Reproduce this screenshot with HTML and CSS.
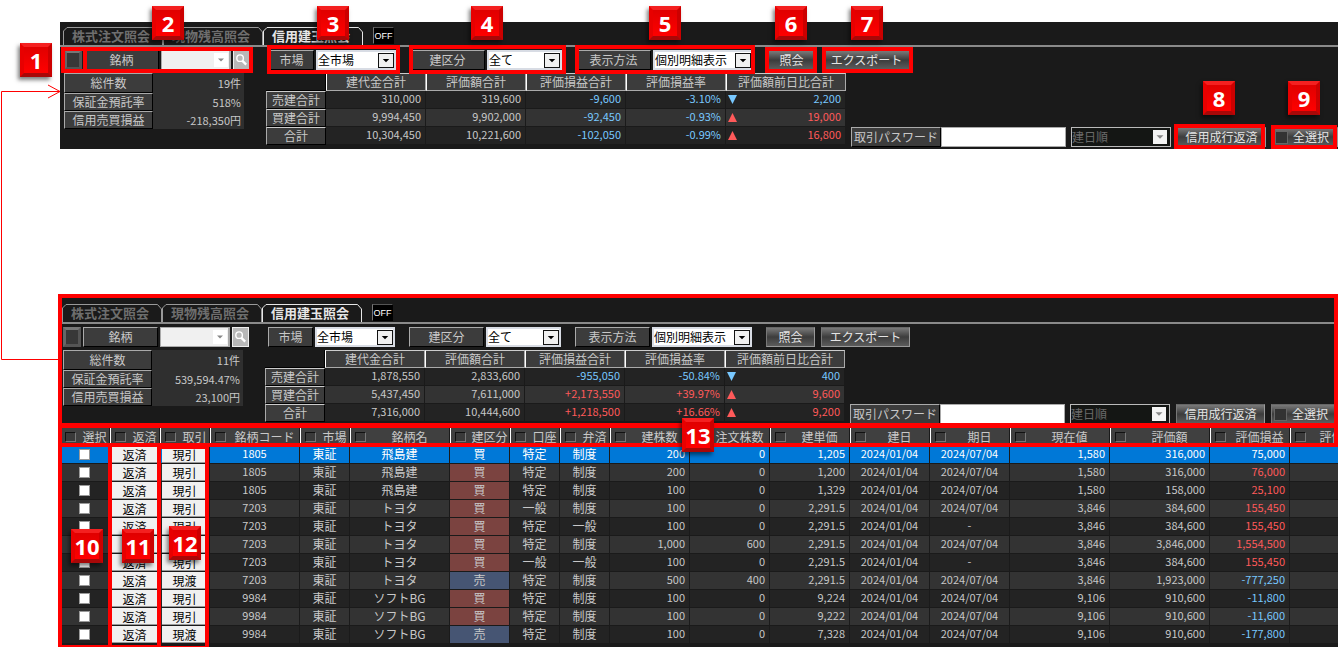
FILE: index.html
```html
<!DOCTYPE html>
<html lang="ja">
<head>
<meta charset="utf-8">
<title>信用建玉照会</title>
<link rel="stylesheet" href="styles.css">
</head>
<body>
<svg class="defs" width="0" height="0" aria-hidden="true">
  <symbol id="arrow" viewBox="0 0 16 16"><path d="M4 6h8l-4 4z" fill="currentColor"/></symbol>
  <symbol id="lens" viewBox="0 0 16 16"><circle cx="6.5" cy="6" r="3.5" fill="#b8b8b8" stroke="#fff" stroke-width="1.5"/><path d="M9 9l4 4" stroke="#fff" stroke-width="2.5"/></symbol>
  <symbol id="tab" viewBox="0 0 100 18" preserveAspectRatio="none"><path d="M.5 18V4L4 .5H95.500L99.500 5V18" fill="none" stroke="currentColor" stroke-width="1"/></symbol>
</svg>
<main class="guide">
  <section class="panel panel-top">
    <div class="head">
      <nav class="tabs">
        <a class="tab" href="#"><svg><use href="#tab"/></svg>株式注文照会</a>
        <a class="tab" href="#"><svg><use href="#tab"/></svg>現物残高照会</a>
        <a class="tab active" href="#"><svg><use href="#tab"/></svg>信用建玉照会</a>
        <button class="off" type="button">OFF</button>
      </nav>
      <form class="toolbar">
        <div class="group symbol">
          <input class="toggle" type="checkbox" aria-label="銘柄指定">
          <label class="caption mid" for="code1">銘柄</label>
          <span class="combo blank"><input id="code1" type="text"><svg class="arrow"><use href="#arrow"/></svg></span>
          <button class="search" type="button" aria-label="検索"><svg><use href="#lens"/></svg></button>
        </div>
        <div class="group">
          <label class="caption small" for="market1">市場</label>
          <span class="combo market"><select id="market1"><option>全市場</option></select><svg class="arrow"><use href="#arrow"/></svg></span>
        </div>
        <div class="group">
          <label class="caption mid" for="side1">建区分</label>
          <span class="combo side"><select id="side1"><option>全て</option></select><svg class="arrow"><use href="#arrow"/></svg></span>
        </div>
        <div class="group">
          <label class="caption mid" for="view1">表示方法</label>
          <span class="combo view"><select id="view1"><option>個別明細表示</option></select><svg class="arrow"><use href="#arrow"/></svg></span>
        </div>
        <div class="group actions">
          <button class="btn query" type="button">照会</button>
          <button class="btn export" type="button">エクスポート</button>
        </div>
      </form>
      <div class="figures">
        <table class="stats">
          <tr><th>総件数</th><td>19件</td></tr>
          <tr><th>保証金預託率</th><td>518%</td></tr>
          <tr><th>信用売買損益</th><td>-218,350円</td></tr>
        </table>
        <table class="totals">
          <tr><td class="corner"></td><th>建代金合計</th><th>評価額合計</th><th>評価損益合計</th><th>評価損益率</th><th class="wide">評価額前日比合計</th></tr>
          <tr><th>売建合計</th><td>310,000</td><td>319,600</td><td class="down">-9,600</td><td class="down">-3.10%</td><td class="down"><i class="tri fall"></i>2,200</td></tr>
          <tr><th>買建合計</th><td>9,994,450</td><td>9,902,000</td><td class="down">-92,450</td><td class="down">-0.93%</td><td class="up"><i class="tri rise"></i>19,000</td></tr>
          <tr><th>合計</th><td>10,304,450</td><td>10,221,600</td><td class="down">-102,050</td><td class="down">-0.99%</td><td class="up"><i class="tri rise"></i>16,800</td></tr>
        </table>
        <form class="order">
          <label class="caption pass" for="pass1">取引パスワード</label>
          <input class="password" id="pass1" type="password">
          <span class="combo sort"><select aria-label="並び順" disabled><option>建日順</option></select><svg class="arrow"><use href="#arrow"/></svg></span>
          <button class="btn repay" type="button">信用成行返済</button>
          <label class="btn all"><input type="checkbox">全選択</label>
        </form>
      </div>
    </div>
  </section>

  <section class="panel panel-bottom">
    <div class="head">
      <nav class="tabs">
        <a class="tab" href="#"><svg><use href="#tab"/></svg>株式注文照会</a>
        <a class="tab" href="#"><svg><use href="#tab"/></svg>現物残高照会</a>
        <a class="tab active" href="#"><svg><use href="#tab"/></svg>信用建玉照会</a>
        <button class="off" type="button">OFF</button>
      </nav>
      <form class="toolbar">
        <div class="group symbol">
          <input class="toggle" type="checkbox" aria-label="銘柄指定">
          <label class="caption mid" for="code2">銘柄</label>
          <span class="combo blank"><input id="code2" type="text"><svg class="arrow"><use href="#arrow"/></svg></span>
          <button class="search" type="button" aria-label="検索"><svg><use href="#lens"/></svg></button>
        </div>
        <div class="group">
          <label class="caption small" for="market2">市場</label>
          <span class="combo market"><select id="market2"><option>全市場</option></select><svg class="arrow"><use href="#arrow"/></svg></span>
        </div>
        <div class="group">
          <label class="caption mid" for="side2">建区分</label>
          <span class="combo side"><select id="side2"><option>全て</option></select><svg class="arrow"><use href="#arrow"/></svg></span>
        </div>
        <div class="group">
          <label class="caption mid" for="view2">表示方法</label>
          <span class="combo view"><select id="view2"><option>個別明細表示</option></select><svg class="arrow"><use href="#arrow"/></svg></span>
        </div>
        <div class="group actions">
          <button class="btn query" type="button">照会</button>
          <button class="btn export" type="button">エクスポート</button>
        </div>
      </form>
      <div class="figures">
        <table class="stats">
          <tr><th>総件数</th><td>11件</td></tr>
          <tr><th>保証金預託率</th><td>539,594.47%</td></tr>
          <tr><th>信用売買損益</th><td>23,100円</td></tr>
        </table>
        <table class="totals">
          <tr><td class="corner"></td><th>建代金合計</th><th>評価額合計</th><th>評価損益合計</th><th>評価損益率</th><th class="wide">評価額前日比合計</th></tr>
          <tr><th>売建合計</th><td>1,878,550</td><td>2,833,600</td><td class="down">-955,050</td><td class="down">-50.84%</td><td class="down"><i class="tri fall"></i>400</td></tr>
          <tr><th>買建合計</th><td>5,437,450</td><td>7,611,000</td><td class="up">+2,173,550</td><td class="up">+39.97%</td><td class="up"><i class="tri rise"></i>9,600</td></tr>
          <tr><th>合計</th><td>7,316,000</td><td>10,444,600</td><td class="up">+1,218,500</td><td class="up">+16.66%</td><td class="up"><i class="tri rise"></i>9,200</td></tr>
        </table>
        <form class="order">
          <label class="caption pass" for="pass2">取引パスワード</label>
          <input class="password" id="pass2" type="password">
          <span class="combo sort"><select aria-label="並び順" disabled><option>建日順</option></select><svg class="arrow"><use href="#arrow"/></svg></span>
          <button class="btn repay" type="button">信用成行返済</button>
          <label class="btn all"><input type="checkbox">全選択</label>
        </form>
      </div>
    </div>

    <table class="positions">
      <colgroup><col class="w50"><col class="w50"><col class="w50"><col class="w90"><col class="w50"><col class="w100"><col class="w60"><col class="w50"><col class="w50"><col class="w80"><col class="w80"><col class="w80"><col class="w80"><col class="w80"><col class="w100"><col class="w100"><col class="w80"><col class="w100"></colgroup>
      <thead>
        <tr>
          <th><label><input type="checkbox"><span>選択</span></label></th>
          <th><label><input type="checkbox"><span>返済</span></label></th>
          <th><label><input type="checkbox"><span>取引</span></label></th>
          <th><label><input type="checkbox"><span>銘柄コード</span></label></th>
          <th><label><input type="checkbox"><span>市場</span></label></th>
          <th><label><input type="checkbox"><span>銘柄名</span></label></th>
          <th><label><input type="checkbox"><span>建区分</span></label></th>
          <th><label><input type="checkbox"><span>口座</span></label></th>
          <th><label><input type="checkbox"><span>弁済</span></label></th>
          <th><label><input type="checkbox"><span>建株数</span></label></th>
          <th><label><input type="checkbox"><span>注文株数</span></label></th>
          <th><label><input type="checkbox"><span>建単価</span></label></th>
          <th><label><input type="checkbox"><span>建日</span></label></th>
          <th><label><input type="checkbox"><span>期日</span></label></th>
          <th><label><input type="checkbox"><span>現在値</span></label></th>
          <th><label><input type="checkbox"><span>評価額</span></label></th>
          <th><label><input type="checkbox"><span>評価損益</span></label></th>
          <th><label><input type="checkbox"><span>評価損益率</span></label></th>
        </tr>
      </thead>
      <tbody>
        <tr class="current"><td><input type="checkbox" aria-label="選択"></td><td><button type="button">返済</button></td><td><button type="button">現引</button></td><td>1805</td><td>東証</td><td>飛島建</td><td>買</td><td>特定</td><td>制度</td><td>200</td><td>0</td><td>1,205</td><td>2024/01/04</td><td>2024/07/04</td><td>1,580</td><td>316,000</td><td>75,000</td><td></td></tr>
        <tr><td><input type="checkbox" aria-label="選択"></td><td><button type="button">返済</button></td><td><button type="button">現引</button></td><td>1805</td><td>東証</td><td>飛島建</td><td class="buy">買</td><td>特定</td><td>制度</td><td>200</td><td>0</td><td>1,200</td><td>2024/01/04</td><td>2024/07/04</td><td>1,580</td><td>316,000</td><td class="up">76,000</td><td></td></tr>
        <tr><td><input type="checkbox" aria-label="選択"></td><td><button type="button">返済</button></td><td><button type="button">現引</button></td><td>1805</td><td>東証</td><td>飛島建</td><td class="buy">買</td><td>特定</td><td>制度</td><td>100</td><td>0</td><td>1,329</td><td>2024/01/04</td><td>2024/07/04</td><td>1,580</td><td>158,000</td><td class="up">25,100</td><td></td></tr>
        <tr><td><input type="checkbox" aria-label="選択"></td><td><button type="button">返済</button></td><td><button type="button">現引</button></td><td>7203</td><td>東証</td><td>トヨタ</td><td class="buy">買</td><td>一般</td><td>制度</td><td>100</td><td>0</td><td>2,291.5</td><td>2024/01/04</td><td>2024/07/04</td><td>3,846</td><td>384,600</td><td class="up">155,450</td><td></td></tr>
        <tr><td><input type="checkbox" aria-label="選択"></td><td><button type="button">返済</button></td><td><button type="button">現引</button></td><td>7203</td><td>東証</td><td>トヨタ</td><td class="buy">買</td><td>特定</td><td>一般</td><td>100</td><td>0</td><td>2,291.5</td><td>2024/01/04</td><td>-</td><td>3,846</td><td>384,600</td><td class="up">155,450</td><td></td></tr>
        <tr><td><input type="checkbox" aria-label="選択"></td><td><button type="button">返済</button></td><td><button type="button">現引</button></td><td>7203</td><td>東証</td><td>トヨタ</td><td class="buy">買</td><td>特定</td><td>制度</td><td>1,000</td><td>600</td><td>2,291.5</td><td>2024/01/04</td><td>2024/07/04</td><td>3,846</td><td>3,846,000</td><td class="up">1,554,500</td><td></td></tr>
        <tr><td><input type="checkbox" aria-label="選択"></td><td><button type="button">返済</button></td><td><button type="button">現引</button></td><td>7203</td><td>東証</td><td>トヨタ</td><td class="buy">買</td><td>一般</td><td>一般</td><td>100</td><td>0</td><td>2,291.5</td><td>2024/01/04</td><td>-</td><td>3,846</td><td>384,600</td><td class="up">155,450</td><td></td></tr>
        <tr><td><input type="checkbox" aria-label="選択"></td><td><button type="button">返済</button></td><td><button type="button">現渡</button></td><td>7203</td><td>東証</td><td>トヨタ</td><td class="sell">売</td><td>特定</td><td>制度</td><td>500</td><td>400</td><td>2,291.5</td><td>2024/01/04</td><td>2024/07/04</td><td>3,846</td><td>1,923,000</td><td class="down">-777,250</td><td></td></tr>
        <tr><td><input type="checkbox" aria-label="選択"></td><td><button type="button">返済</button></td><td><button type="button">現引</button></td><td>9984</td><td>東証</td><td>ソフトBG</td><td class="buy">買</td><td>特定</td><td>制度</td><td>100</td><td>0</td><td>9,224</td><td>2024/01/04</td><td>2024/07/04</td><td>9,106</td><td>910,600</td><td class="down">-11,800</td><td></td></tr>
        <tr><td><input type="checkbox" aria-label="選択"></td><td><button type="button">返済</button></td><td><button type="button">現引</button></td><td>9984</td><td>東証</td><td>ソフトBG</td><td class="buy">買</td><td>特定</td><td>制度</td><td>100</td><td>0</td><td>9,222</td><td>2024/01/04</td><td>2024/07/04</td><td>9,106</td><td>910,600</td><td class="down">-11,600</td><td></td></tr>
        <tr><td><input type="checkbox" aria-label="選択"></td><td><button type="button">返済</button></td><td><button type="button">現渡</button></td><td>9984</td><td>東証</td><td>ソフトBG</td><td class="sell">売</td><td>特定</td><td>制度</td><td>100</td><td>0</td><td>7,328</td><td>2024/01/04</td><td>2024/07/04</td><td>9,106</td><td>910,600</td><td class="down">-177,800</td><td></td></tr>
      </tbody>
    </table>
  </section>

  <div class="marks">
    <svg class="link" viewBox="0 0 64 280"><path d="M58 276.500H1.500V8.500H60M48 2L60 8.500L48 15" fill="none" stroke="#f00" stroke-width="1"/></svg>
    <div class="frame f1"></div><div class="frame f2"></div><div class="frame f3"></div>
    <div class="frame f4"></div><div class="frame f5"></div><div class="frame f6"></div>
    <div class="frame f7"></div><div class="frame f8"></div><div class="frame f9"></div>
    <div class="frame fhead"></div><div class="frame f10"></div><div class="frame f11"></div>
    <div class="frame f12"></div><div class="frame f13"></div>
    <span class="badge b1">1</span><span class="badge b2">2</span><span class="badge b3">3</span>
    <span class="badge b4">4</span><span class="badge b5">5</span><span class="badge b6">6</span>
    <span class="badge b7">7</span><span class="badge b8">8</span><span class="badge b9">9</span>
    <span class="badge b10">10</span><span class="badge b11">11</span><span class="badge b12">12</span>
    <span class="badge b13">13</span>
  </div>
</main>
</body>
</html>
```

FILE: styles.css
```css
* { box-sizing: border-box; }
body {
  margin: 0;
  background: #fff;
  overflow: hidden;
  font: 12px/16px "Noto Sans CJK JP", sans-serif;
  color: #c8c8c8;
}
button, input, select { font: inherit; color: inherit; margin: 0; padding: 0; border-radius: 0; }
select, input[type="checkbox"] { appearance: none; }
table { border-collapse: separate; border-spacing: 0; }
th, td { padding: 0; font-weight: normal; white-space: nowrap; }
.defs { position: absolute; }

.guide { position: relative; padding-top: 22px; }
.panel { background: #1a1a1a; overflow: hidden; }
.panel-top { margin-left: 60px; margin-bottom: 149px; }
.panel-bottom { margin-left: 59px; padding: 1px 0 3px; }
.head { height: 127px; overflow: hidden; }

/* tabs */
.tabs {
  display: flex;
  align-items: flex-end;
  height: 25px;
  padding-left: 3px;
  border-bottom: 2px solid #8a8a8a;
}
.tab {
  position: relative;
  width: 100px;
  height: 18px;
  padding-right: 4px;
  text-align: center;
  line-height: 17px;
  font-size: 13px;
  font-weight: bold;
  color: #6e6e6e;
  text-decoration: none;
}
.tab svg { position: absolute; inset: 0; width: 100%; height: 100%; color: #999; }
.tab.active, .tab.active svg { color: #e6e6e6; }
.off {
  width: 21px;
  height: 17px;
  margin-left: 10px;
  margin-bottom: 1px;
  border: 1px solid #000;
  border-left-color: #777;
  border-top-color: #555;
  background: #000;
  color: #fff;
  font: 9px/14px "Liberation Sans", sans-serif;
}

/* search conditions */
.toolbar { display: flex; gap: 14px; padding: 3px 0 0 4px; }
.group { display: flex; gap: 2px; }
.symbol { width: 191px; }
.actions { gap: 6px; }
.caption {
  height: 20px;
  line-height: 18px;
  text-align: center;
  background: #3c3c3c;
  border: 1px solid #000;
  border-top-color: #aaa;
  border-left-color: #aaa;
}
.mid { width: 75px; }
.small { width: 45px; }
.toggle {
  width: 18px;
  height: 20px;
  border: 3px solid #555;
  border-top-color: #777;
  border-left-color: #666;
  background: #383838;
}
.combo {
  display: flex;
  align-items: center;
  height: 20px;
  border: 2px solid #d8dce4;
  background: #fff;
  color: #000;
}
.combo select, .combo input { flex: 1; min-width: 0; height: 16px; border: 0; background: transparent; color: #000; opacity: 1; line-height: 16px; }
.arrow { flex: none; width: 16px; height: 15px; border: 1px solid #111; background: #f0f0f0; }
.market { width: 80px; }
.side { width: 75px; }
.view { width: 100px; }
.blank { width: 70px; border: 1px solid #aaa; border-right-width: 2px; background: #f0f0f0; }
.blank .arrow { width: 14px; height: 14px; margin-right: 1px; border-color: #fff; color: #888; background: #fff; }
.search { width: 17px; height: 20px; border: 1px solid #eee; background: #b8b8b8; }
.search svg { display: block; width: 15px; height: 18px; }
.btn {
  height: 20px;
  line-height: 18px;
  text-align: center;
  border: 1px solid #999;
  border-top-color: #666;
  border-left-color: #777;
  background: linear-gradient(#7a7a7a, #3c3c3c 50%, #5c5c5c);
  color: #e4e4e4;
}
.query { width: 49px; }
.export { width: 89px; }

/* summary figures */
.figures { display: flex; align-items: flex-start; padding: 3px 0 0 4px; }
.stats { width: 180px; margin-right: 22px; text-align: right; }
.stats th { width: 89px; height: 18px; text-align: center; background: #3c3c3c; border: 1px solid #000; border-top-color: #aaa; border-left-color: #aaa; }
.stats td { padding-right: 3px; background: #2f2f2f; font-size: 11px; }
.stats tr:first-child th { height: 20px; }
.stats th, .stats td { line-height: 16px; }
.totals { table-layout: fixed; width: 580px; margin-right: 5px; text-align: right; }
.totals th { height: 18px; line-height: 16px; text-align: center; background: #3c3c3c; border: 1px solid #aaa; border-left-color: #fff; border-top-color: #ccc; }
.totals tr > :first-child { width: 60px; border-left-color: #aaa; border-right-color: #000; border-bottom-color: #000; }
.totals .wide { width: 120px; }
.totals td { padding-right: 4px; line-height: 15px; vertical-align: top; font-size: 11px; border-right: 1px solid #1a1a1a; border-bottom: 1px solid #1a1a1a; background: #232323; }
.totals tr:nth-child(3) td { background: #333; }
.totals .corner { background: transparent; border-color: transparent; }
.tri { float: left; width: 9px; height: 9px; margin: 4px 0 0 2px; background: currentColor; }
.fall { clip-path: polygon(0 0, 100% 0, 50% 100%); }
.rise { clip-path: polygon(50% 0, 100% 100%, 0 100%); }
.up, .current .up { color: #ff5a5a; }
.down { color: #78c8ff; }

.order { display: flex; padding-top: 54px; }
.pass { width: 90px; }
.password { width: 125px; height: 20px; border: 1px solid #aaa; background: #fff; color: #000; }
.sort { width: 100px; margin: 0 6px 0 5px; border: 1px solid #bbb; background: #141614; }
.sort select { color: #6a6a6a; }
.sort .arrow { width: 14px; height: 14px; margin-right: 3px; border: 0; color: #888; background: #f4f4f4; }
.repay { width: 89px; margin-right: 6px; }
.all { display: flex; align-items: center; gap: 5px; width: 66px; padding-left: 2px; white-space: nowrap; }
.all input { width: 13px; height: 13px; border: 1px solid #666; background: #333; }

/* positions */
.positions { table-layout: fixed; width: 1330px; margin-left: 1px; text-align: center; }
.w50 { width: 50px; }
.w60 { width: 60px; }
.w80 { width: 80px; }
.w90 { width: 90px; }
.w100 { width: 100px; }
.panel-bottom .head { margin-bottom: 1px; }
.positions th { height: 19px; background: #404040; border: 1px solid #1a1a1a; border-top-color: #fff; border-left-color: #fff; overflow: hidden; }
.positions label { display: flex; align-items: center; gap: 4px; padding-left: 4px; line-height: 15px; }
.positions label span { flex: 1; }
.positions label input { flex: none; width: 11px; height: 10px; border: 1px solid #777; border-top-color: #111; border-left-color: #111; background: #3a3a3a; }
.positions td { height: 18px; line-height: 15px; vertical-align: top; border-right: 1px solid #1a1a1a; border-bottom: 1px solid #1a1a1a; background: #232323; }
.positions tr:nth-child(even) td { background: #333; }
.positions tr.current td { background: #0078d7; color: #fff; }
.positions tr .buy.buy { background: #7b4340; }
.positions tr .sell.sell { background: #465573; }
.positions td:nth-child(4), .positions td:nth-child(n+10) { font-size: 11px; }
.positions td:nth-child(n+10):not(:nth-child(13)):not(:nth-child(14)) { text-align: right; padding-right: 4px; }
.positions td input { display: block; width: 11px; height: 11px; margin: 3px auto 0; border: 1px solid #999; background: #fff; }
.positions td button { display: block; width: 45px; height: 17px; margin: 0 auto; line-height: 15px; border: 0; border-bottom: 1px solid #999; background: #f0f0f0; color: #000; }

/* numbered callouts drawn over the screens */
.marks { position: absolute; inset: 0; pointer-events: none; }
.link { position: absolute; left: 0; top: 83px; width: 64px; height: 280px; }
.frame { position: absolute; border: 4px solid #f00; }
.f1 { left: 61px; top: 47px; width: 26px; height: 26px; }
.f2 { left: 83px; top: 47px; width: 170px; height: 26px; }
.f3 { left: 267px; top: 45px; width: 133px; height: 29px; }
.f4 { left: 409px; top: 45px; width: 157px; height: 29px; }
.f5 { left: 575px; top: 45px; width: 180px; height: 29px; }
.f6 { left: 765px; top: 47px; width: 52px; height: 26px; }
.f7 { left: 822px; top: 47px; width: 91px; height: 26px; }
.f8 { left: 1174px; top: 124px; width: 91px; height: 25px; }
.f9 { left: 1271px; top: 125px; width: 66px; height: 24px; }
.fhead { left: 58px; right: 0; top: 294px; height: 133px; }
.f10 { left: 58px; top: 443px; width: 54px; height: 206px; }
.f11 { left: 108px; top: 443px; width: 53px; height: 206px; }
.f12 { left: 157px; top: 445px; width: 52px; height: 205px; }
.f13 { left: 58px; right: 0; top: 424px; height: 23px; }
.badge {
  position: absolute;
  width: 32px;
  height: 34px;
  border: 4px solid;
  border-color: #f42020 #cc0000 #a80808 #e80000;
  background: linear-gradient(#e00000, #ff0000);
  box-shadow: -2px 3px 4px rgba(0, 0, 0, .5);
  color: #fff;
  font: bold 22px/26px "Noto Sans", sans-serif;
  display: flex;
  justify-content: center;
}
.b1 { left: 20px; top: 43px; }
.b2 { left: 152px; top: 6px; }
.b3 { left: 317px; top: 6px; }
.b4 { left: 471px; top: 6px; }
.b5 { left: 649px; top: 6px; }
.b6 { left: 775px; top: 6px; }
.b7 { left: 851px; top: 6px; }
.b8 { left: 1203px; top: 81px; }
.b9 { left: 1288px; top: 81px; }
.b10 { left: 71px; top: 529px; }
.b11 { left: 122px; top: 529px; }
.b12 { left: 169px; top: 526px; }
.b13 { left: 682px; top: 418px; }
```
